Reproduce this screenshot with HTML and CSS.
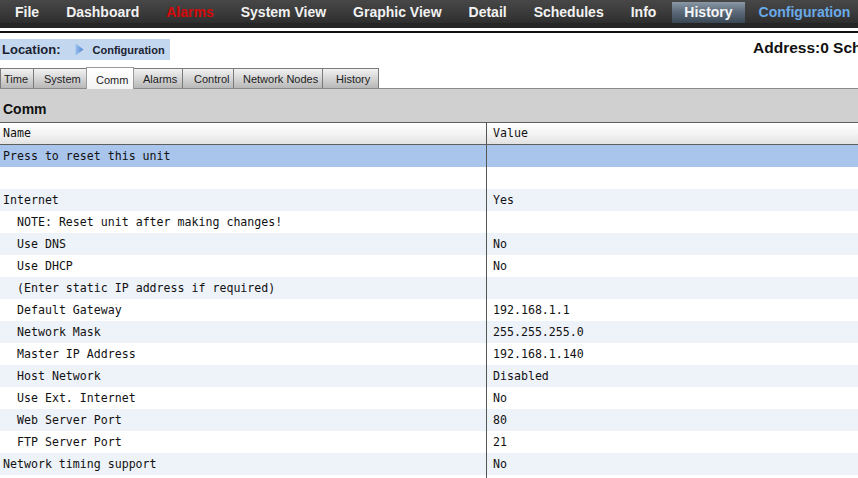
FILE: index.html
```html
<!DOCTYPE html>
<html>
<head>
<meta charset="utf-8">
<link rel="stylesheet" href="styles.css">
</head>
<body>
<div class="page">
  <div class="nav">
    <span class="nav-item">File</span>
    <span class="nav-item">Dashboard</span>
    <span class="nav-item alarm">Alarms</span>
    <span class="nav-item">System View</span>
    <span class="nav-item">Graphic View</span>
    <span class="nav-item">Detail</span>
    <span class="nav-item">Schedules</span>
    <span class="nav-item">Info</span>
    <span class="nav-item hover">History</span>
    <span class="nav-item current">Configuration</span>
  </div>
  <div class="rule"></div>
  <div class="header-row">
    <div class="location">
      <span class="loc-label">Location:</span>
      <svg class="loc-arrow" width="9" height="13" viewBox="0 0 9 13"><defs><linearGradient id="g" x1="0" y1="0" x2="1" y2="0"><stop offset="0" stop-color="#9cc0ee"/><stop offset="1" stop-color="#4f86d2"/></linearGradient></defs><path d="M0.5 0.5 L8.5 6.5 L0.5 12.5 Z" fill="url(#g)"/></svg>
      <span class="loc-value">Configuration</span>
    </div>
    <div class="address">Address:0 Schedule</div>
  </div>
  <div class="tabs">
    <span class="tab t-time">Time</span>
    <span class="tab t-system">System</span>
    <span class="tab t-comm active">Comm</span>
    <span class="tab t-alarms">Alarms</span>
    <span class="tab t-control">Control</span>
    <span class="tab t-nodes">Network Nodes</span>
    <span class="tab t-history">History</span>
  </div>
  <div class="section">Comm</div>
  <div class="table">
    <div class="row head"><div class="c1">Name</div><div class="c2">Value</div></div>
    <div class="row sel"><div class="c1">Press to reset this unit</div><div class="c2"></div></div>
    <div class="row"><div class="c1"></div><div class="c2"></div></div>
    <div class="row alt"><div class="c1">Internet</div><div class="c2">Yes</div></div>
    <div class="row"><div class="c1 ind">NOTE: Reset unit after making changes!</div><div class="c2"></div></div>
    <div class="row alt"><div class="c1 ind">Use DNS</div><div class="c2">No</div></div>
    <div class="row"><div class="c1 ind">Use DHCP</div><div class="c2">No</div></div>
    <div class="row alt"><div class="c1 ind">(Enter static IP address if required)</div><div class="c2"></div></div>
    <div class="row"><div class="c1 ind">Default Gateway</div><div class="c2">192.168.1.1</div></div>
    <div class="row alt"><div class="c1 ind">Network Mask</div><div class="c2">255.255.255.0</div></div>
    <div class="row"><div class="c1 ind">Master IP Address</div><div class="c2">192.168.1.140</div></div>
    <div class="row alt"><div class="c1 ind">Host Network</div><div class="c2">Disabled</div></div>
    <div class="row"><div class="c1 ind">Use Ext. Internet</div><div class="c2">No</div></div>
    <div class="row alt"><div class="c1 ind">Web Server Port</div><div class="c2">80</div></div>
    <div class="row"><div class="c1 ind">FTP Server Port</div><div class="c2">21</div></div>
    <div class="row alt"><div class="c1">Network timing support</div><div class="c2">No</div></div>
    <div class="row"><div class="c1"></div><div class="c2"></div></div>
  </div>
</div>
</body>
</html>
```
FILE: styles.css
```css
html, body {
  margin: 0;
  padding: 0;
  background: #ffffff;
  overflow: hidden;
}
.page {
  width: 858px;
  height: 478px;
  overflow: hidden;
  font-family: "Liberation Sans", Arial, sans-serif;
}
.nav {
  display: flex;
  height: 23px;
  padding-left: 2px;
  background: linear-gradient(#474747, #3c3c3c 50%, #2e2e2e);
  border-bottom: 5px solid #262626;
}
.nav-item {
  display: flex;
  align-items: center;
  padding: 0 13px;
  margin-right: 1px;
  color: #f2f2f2;
  font-weight: bold;
  font-size: 14px;
  white-space: nowrap;
  height: 23px;
}
.nav-item.alarm { color: #d80808; }
.nav-item.hover {
  background: linear-gradient(#8b98a6, #5d6b7a 45%, #3a4856);
  color: #f4f6f8;
  margin-top: 2px;
  height: 21px;
  padding: 0 12px 2px 12px;
  margin-left: 2px;
  box-sizing: border-box;
}
.nav-item.current { color: #6aaae8; }
.rule {
  height: 2px;
  margin-top: 3px;
  background: #111;
}
.header-row {
  display: grid;
  grid-template-columns: 753px max-content;
  margin-top: 6px;
  height: 21px;
  align-items: center;
}
.location {
  display: flex;
  align-items: center;
  width: 170px;
  height: 21px;
  background: #c3d7ef;
  color: #1b2230;
}
.loc-label {
  font-weight: bold;
  font-size: 13px;
  margin-left: 2px;
}
.loc-arrow { margin-left: 14px; margin-right: 9px; }
.loc-value {
  font-weight: bold;
  font-size: 11px;
}
.address {
  font-weight: bold;
  font-size: 15.5px;
  color: #111;
  white-space: nowrap;
  align-self: start;
}
.tabs {
  display: flex;
  margin-top: 8px;
  height: 20px;
  align-items: flex-end;
}
.tab {
  display: flex;
  align-items: center;
  box-sizing: border-box;
  height: 20px;
  font-size: 11px;
  color: #222;
  background: linear-gradient(#f2f2f2, #cfcfcf 60%, #b8b8b8);
  border: 1px solid #7a7a7a;
  border-bottom: none;
  margin-right: -1px;
  white-space: nowrap;
}
.t-time { width: 34px; padding-left: 3px; }
.t-system { width: 54px; padding-left: 10px; }
.t-comm { width: 48px; padding-left: 9px; }
.t-alarms { width: 50px; padding-left: 9px; }
.t-control { width: 52px; padding-left: 11px; }
.t-nodes { width: 90px; padding-left: 9px; }
.t-history { width: 57px; padding-left: 13px; }
.tab.active {
  background: linear-gradient(#ffffff, #f3f3f3);
  height: 22px;
  padding-top: 3px;
  border-color: #9a9a9a;
  position: relative;
  z-index: 1;
  margin-bottom: -1px;
}
.section {
  border-top: 1px solid #8a8a8a;
  background: #d0d0d0;
  font-weight: bold;
  font-size: 14px;
  color: #111;
  display: flex;
  align-items: flex-end;
  padding-left: 3px;
  padding-bottom: 5px;
  height: 28px;
}
.table {
  font-family: "DejaVu Sans Mono", "Liberation Mono", monospace;
  font-size: 11.6px;
  color: #111;
}
.row {
  display: grid;
  grid-template-columns: 486px 1fr;
  height: 22px;
  background: #ffffff;
}
.row > div {
  display: flex;
  align-items: center;
  white-space: nowrap;
  padding-bottom: 1px;
}
.row.alt { background: #eef2f9; }
.row.sel { background: #a9c5ec; }
.row.head {
  height: 21px;
  border-top: 1px solid #5e5e5e;
  border-bottom: 1px solid #5e5e5e;
  background: linear-gradient(#ffffff, #f4f4f4 50%, #e2e2e2);
}
.c1 { padding-left: 3px; }
.c1.ind { padding-left: 17px; }
.c2 {
  border-left: 1px solid #555;
  padding-left: 6px;
}
```
